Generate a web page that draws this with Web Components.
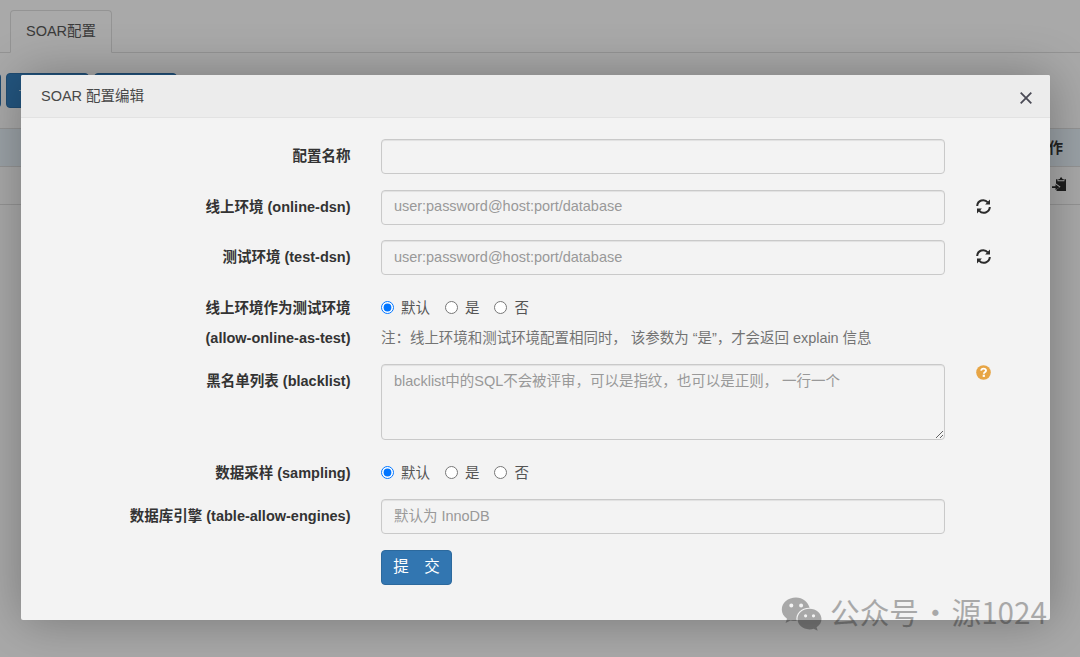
<!DOCTYPE html>
<html lang="zh-CN">
<head>
<meta charset="utf-8">
<title>SOAR配置</title>
<style>
  html, body { margin: 0; height: 100%; overflow: hidden; }
  body {
    position: relative;
    background: #f3f3f3;
    color: #333;
    font: 14.5px/20px "Liberation Sans", "Noto Sans CJK SC", sans-serif;
  }
</style>
</head>
<body>
<config-page></config-page>
<soar-dialog heading="SOAR 配置编辑">
  <form-row label="配置名称"><text-field></text-field></form-row>
  <form-row label="线上环境 (online-dsn)">
    <text-field placeholder="user:password@host:port/database"></text-field>
    <app-icon slot="tip" name="refresh"></app-icon>
  </form-row>
  <form-row label="测试环境 (test-dsn)">
    <text-field placeholder="user:password@host:port/database"></text-field>
    <app-icon slot="tip" name="refresh"></app-icon>
  </form-row>
  <form-row class="two-line" label="线上环境作为测试环境 (allow-online-as-test)">
    <radio-group name="online"></radio-group>
    <help-note>注：线上环境和测试环境配置相同时， 该参数为 “是”，才会返回 explain 信息</help-note>
  </form-row>
  <form-row class="area" label="黑名单列表 (blacklist)">
    <text-field multiline placeholder="blacklist中的SQL不会被评审，可以是指纹，也可以是正则， 一行一个"></text-field>
    <app-icon slot="tip" name="question"></app-icon>
  </form-row>
  <form-row class="radios" label="数据采样 (sampling)"><radio-group name="sampling"></radio-group></form-row>
  <form-row label="数据库引擎 (table-allow-engines)"><text-field placeholder="默认为 InnoDB"></text-field></form-row>
  <form-row><submit-button>提　交</submit-button></form-row>
</soar-dialog>
<account-mark>公众号 · 源1024</account-mark>

<script>
  const icons = {
    close: '<svg width="12" height="12" viewBox="0 0 12 12"><path d="M.7.7l10.600 10.600M11.300.7L.7 11.300" fill="none" stroke="#4a4a55" stroke-width="1.8"/></svg>',
    refresh: '<svg width="15" height="15" viewBox="0 0 15 15"><g fill="none" stroke="#2b2b2b" stroke-width="2"><path d="M1.200 7A6 6 0 0 1 11.800 3.400M13.800 8A6 6 0 0 1 3.200 11.600"/></g><path fill="#2b2b2b" d="M14 .6v4.900H9.100zM1 14.400V9.500h4.900z"/></svg>',
    question: '<svg width="15" height="15" viewBox="0 0 15 15"><circle cx="7.500" cy="7.500" r="7.300" fill="#e7a545"/><path d="M5.100 5.700q.3-2.100 2.500-2.100t2.400 1.900q0 1.100-1.200 1.800-.9.500-.9 1.400" fill="none" stroke="#fff" stroke-width="1.900"/><rect x="6.700" y="9.700" width="2.200" height="2.200" fill="#fff"/></svg>',
    paste: '<svg width="15" height="15" viewBox="0 0 15 15"><path fill="#2b2b2b" d="M4 2.200h1.500v2h6.900v-2H14V14H4.500v-1.600L8.600 9.800 4 6.400z"/><path fill="#2b2b2b" d="M6.400 3.300V2h1.400Q8 .2 9.100.2T10.400 2h1.300v1.300z"/><path fill="#2b2b2b" d="M0 9.300h3.500V7.300l4 2.900-4 2.900v-2H0z"/></svg>',
    plus: '<svg width="11" height="11" viewBox="0 0 11 11"><path d="M5.500 0v11M0 5.500h11" stroke="#fff" stroke-width="1.200" opacity=".6"/></svg>'
  };

  // attaches an open shadow root filled with styles and markup
  class BaseElement extends HTMLElement {
    render(html) {
      this.attachShadow({ mode: 'open' }).innerHTML = html;
    }
  }

  class AppIcon extends BaseElement {
    connectedCallback() {
      this.render(`
        <style>:host { display: inline-flex; } svg { display: block; }</style>
        ${icons[this.getAttribute('name')]}
      `);
    }
  }

  class ConfigPage extends BaseElement {
    connectedCallback() {
      this.render(`
        <style>
          :host { display: block; }
          .tabs {
            display: flex;
            box-sizing: border-box;
            height: 53px;
            padding: 10px 0 0 10px;
            border-bottom: 1px solid #d4d4d4;
          }
          .tab {
            box-sizing: border-box;
            width: 102px;
            height: 43px;
            padding: 10px 0 0 15px;
            border: 1px solid #d4d4d4;
            border-bottom-color: #f3f3f3;
            border-radius: 4px 4px 0 0;
            color: #555;
          }
          .toolbar { display: flex; gap: 5px; margin: 20px 0 20px -82px; }
          .btn {
            display: flex;
            align-items: center;
            box-sizing: border-box;
            width: 83px;
            height: 35px;
            padding-left: 12px;
            background: #337ab7;
            border: 1px solid #2e6da4;
            border-radius: 4px;
          }
          .head, .row {
            display: flex;
            align-items: center;
            justify-content: flex-end;
            box-sizing: border-box;
            height: 38px;
            border-top: 1px solid #d4d4d4;
          }
          .head { padding-right: 17px; background: #dfe9f0; font-weight: bold; }
          .row { height: 39px; padding: 0 13px 2px 0; border-bottom: 1px solid #d4d4d4; }
        </style>
        <div class="tabs"><div class="tab">SOAR配置</div></div>
        <div class="toolbar">
          <div class="btn"></div>
          <div class="btn"><app-icon name="plus"></app-icon></div>
          <div class="btn"></div>
        </div>
        <div class="head">作</div>
        <div class="row"><app-icon name="paste"></app-icon></div>
      `);
    }
  }

  class SoarDialog extends BaseElement {
    connectedCallback() {
      this.render(`
        <style>
          :host {
            position: absolute;
            inset: 0;
            display: block;
            padding: 75px 30px 37px 21px;
            background: rgba(0, 0, 0, .3);
          }
          .box {
            box-sizing: border-box;
            height: 545px;
            background: #f3f3f3;
            border-radius: 2px;
            box-shadow: 1px 1px 50px rgba(0, 0, 0, .3);
          }
          header {
            display: flex;
            align-items: center;
            justify-content: space-between;
            box-sizing: border-box;
            height: 43px;
            padding: 0 18px 0 20px;
            background: #ececec;
            border-bottom: 1px solid #e2e2e2;
            border-radius: 2px 2px 0 0;
            color: #484848;
          }
          header app-icon { margin-top: 4px; }
          .body { padding-top: 21px; }
        </style>
        <div class="box">
          <header><span>${this.getAttribute('heading')}</span><app-icon name="close"></app-icon></header>
          <div class="body"><slot></slot></div>
        </div>
      `);
    }
  }

  class FormRow extends BaseElement {
    connectedCallback() {
      this.render(`
        <style>
          :host {
            display: grid;
            grid-template-columns: 329.500px 564px 15px;
            column-gap: 30.500px;
            height: 35px;
            margin-bottom: 15.500px;
          }
          :host(.two-line) { height: 60px; margin-bottom: 13.500px; }
          :host(.area) { height: 76px; margin-bottom: 15.500px; }
          :host(.radios) { height: 35px; margin-bottom: 8.500px; }
          label {
            justify-self: end;
            padding-top: 2px;
            line-height: 30.500px;
            font-weight: bold;
            text-align: right;
            white-space: nowrap;
          }
          :host(.two-line) label { width: 150px; white-space: normal; }
          .tip { display: flex; padding-top: 9px; height: 15px; }
          :host(.area) .tip { padding-top: 1px; }
        </style>
        <label>${this.getAttribute('label') || ''}</label>
        <div><slot></slot></div>
        <div class="tip"><slot name="tip"></slot></div>
      `);
    }
  }

  class TextField extends BaseElement {
    connectedCallback() {
      const hint = this.getAttribute('placeholder') || '';
      const multi = this.hasAttribute('multiline');
      this.render(`
        <style>
          :host { display: block; }
          input, textarea {
            display: block;
            box-sizing: border-box;
            width: 100%;
            height: 35px;
            margin: 0;
            padding: 5px 12px 7px;
            background: transparent;
            border: 1px solid #c9c9c9;
            border-radius: 4px;
            box-shadow: inset 0 1px 1px rgba(0, 0, 0, .075);
            color: #555;
            font: inherit;
            letter-spacing: -.03px;
          }
          textarea { height: 76px; padding-top: 6px; resize: vertical; }
          ::placeholder { color: #999; opacity: 1; }
        </style>
        ${multi ? `<textarea placeholder="${hint}"></textarea>` : `<input type="text" placeholder="${hint}">`}
      `);
    }
  }

  class RadioGroup extends BaseElement {
    connectedCallback() {
      const name = this.getAttribute('name');
      const options = ['默认', '是', '否'];
      this.render(`
        <style>
          :host { display: flex; gap: 14.500px; height: 34px; }
          label { display: flex; align-items: center; gap: 7px; color: #555; }
          label + label { gap: 7.500px; }
          input { width: 13px; height: 13px; margin: 0; }
        </style>
        ${options.map((text, i) => `<label><input type="radio" name="${name}"${i ? '' : ' checked'}>${text}</label>`).join('')}
      `);
    }
  }

  class HelpNote extends BaseElement {
    connectedCallback() {
      this.render(`
        <style>
          :host { display: block; padding-top: 3px; color: #737373; letter-spacing: -.04px; white-space: nowrap; }
        </style>
        <slot></slot>
      `);
    }
  }

  class SubmitButton extends BaseElement {
    connectedCallback() {
      this.render(`
        <style>
          :host { display: block; }
          button {
            box-sizing: border-box;
            width: 71px;
            height: 35px;
            padding: 0 0 1px;
            background: #3276b1;
            border: 1px solid #2c699d;
            border-radius: 4px;
            color: #fff;
            font: inherit;
            font-size: 15.500px;
          }
        </style>
        <button><slot></slot></button>
      `);
    }
  }

  // translucent account name in the bottom right corner
  class AccountMark extends BaseElement {
    connectedCallback() {
      this.render(`
        <style>
          :host {
            position: absolute;
            left: 781px;
            top: 591px;
            display: flex;
            align-items: center;
            gap: 8px;
            opacity: .3;
            color: #000;
            font: 29.700px/42px "Noto Sans CJK SC", sans-serif;
            word-spacing: -5.300px;
            white-space: nowrap;
          }
          svg { display: block; margin-top: 3px; }
        </style>
        <svg width="41" height="34" viewBox="0 0 41 34">
          <path fill-rule="evenodd" d="M15 .5C6.900.500.800 5.800.800 12.500c0 3.800 2 7 5.200 9.200l-1.400 4.200 4.900-2.500c1.700.5 3.600.8 6.200.7-1.800-7.200 4.600-13.400 12.900-13.300C27.200 4.800 21.600.500 15 .500zM10.300 6.500a2 2 0 110 4 2 2 0 010-4zm9.800 0a2 2 0 110 4 2 2 0 010-4z"/>
          <path fill-rule="evenodd" d="M28.500 11.800c-6.800 0-12 4.600-12 10.300s5.200 10.300 12 10.300c1.500 0 2.900-.2 4.200-.6l4 2-1.100-3.500c3-1.900 4.900-4.800 4.900-8.200 0-5.700-5.200-10.300-12-10.300zM24.600 17.200a1.600 1.600 0 110 3.200 1.600 1.600 0 010-3.200zm7.900 0a1.600 1.600 0 110 3.200 1.600 1.600 0 010-3.200z"/>
        </svg>
        <slot></slot>
      `);
    }
  }

  customElements.define('app-icon', AppIcon);
  customElements.define('config-page', ConfigPage);
  customElements.define('soar-dialog', SoarDialog);
  customElements.define('form-row', FormRow);
  customElements.define('text-field', TextField);
  customElements.define('radio-group', RadioGroup);
  customElements.define('help-note', HelpNote);
  customElements.define('submit-button', SubmitButton);
  customElements.define('account-mark', AccountMark);
</script>
</body>
</html>
